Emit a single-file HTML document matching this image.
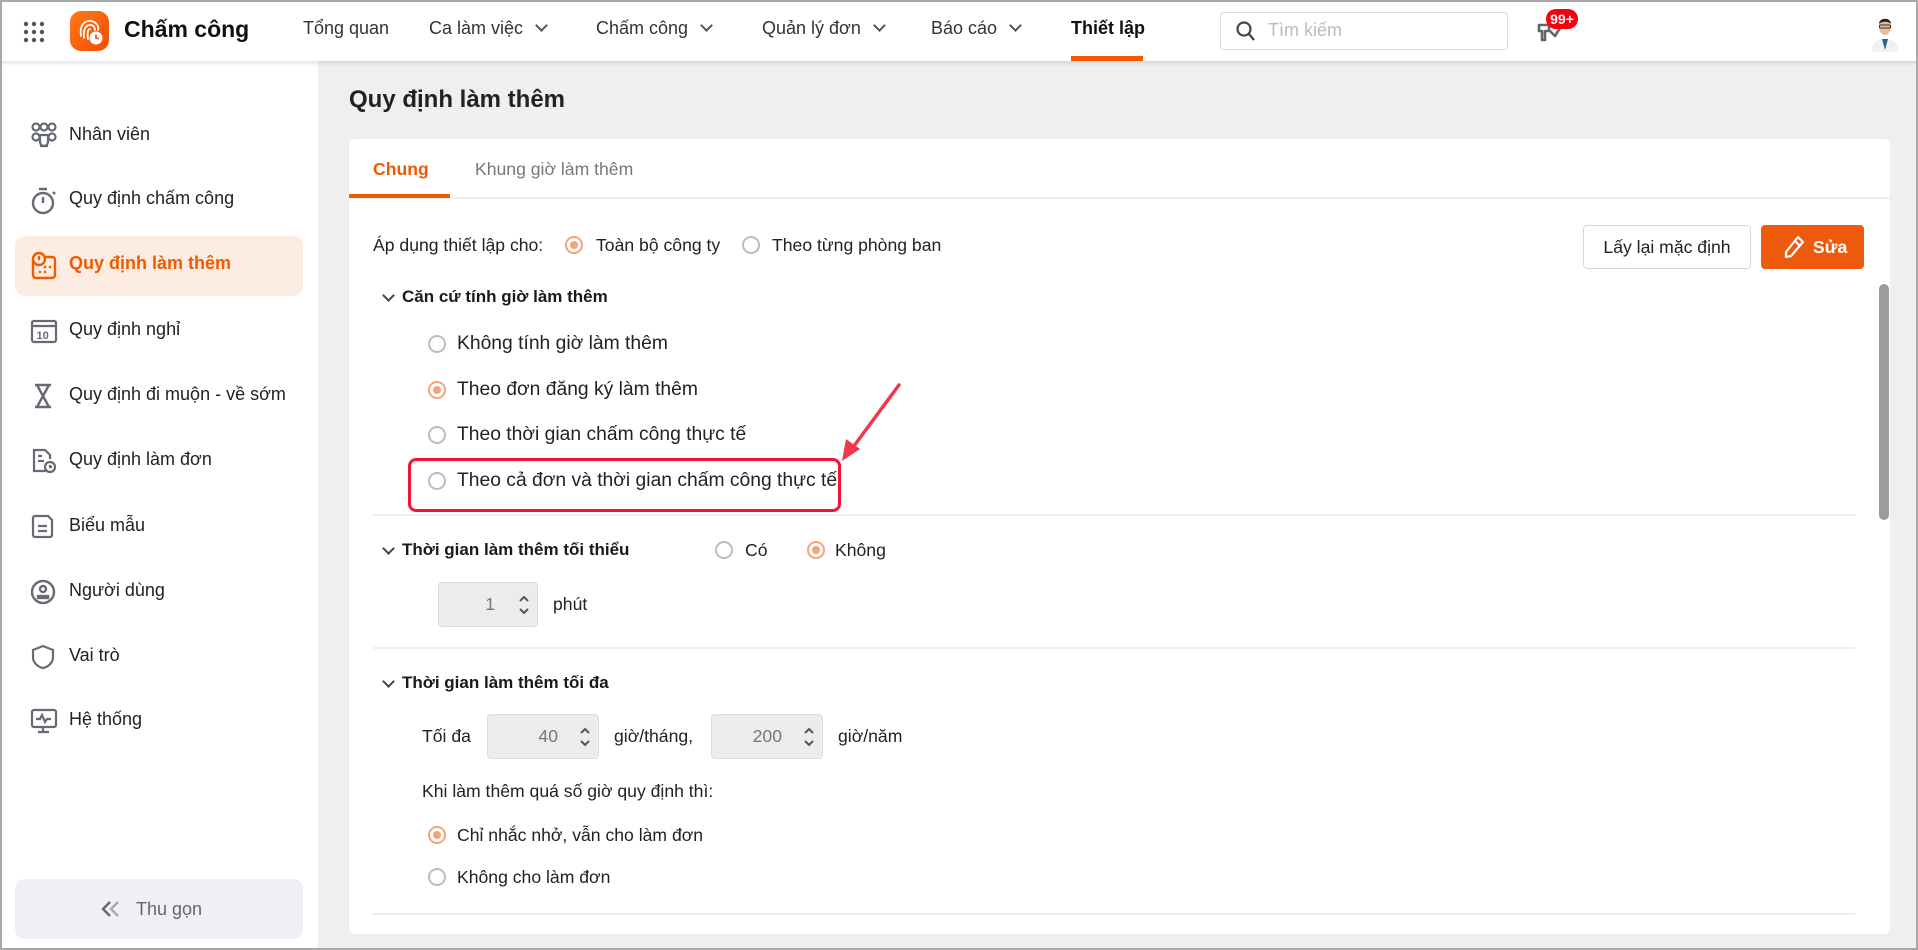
<!DOCTYPE html>
<html><head><meta charset="utf-8">
<style>
*{box-sizing:border-box;margin:0;padding:0}
body{width:1918px;height:950px;overflow:hidden;background:#efefef;font-family:"Liberation Sans",sans-serif;color:#212121;position:relative}
.a{position:absolute;white-space:nowrap}
#frame{position:absolute;left:0;top:0;width:1918px;height:950px;border:2px solid #a8a8a8;pointer-events:none;z-index:50}
#hdr{position:absolute;left:0;top:0;width:1918px;height:61px;background:#fff;box-shadow:0 2px 4px rgba(0,0,0,.12);z-index:5}
.nav{font-size:18px;color:#333;top:18px}
.chev{display:inline-block;width:9px;height:9px;border-right:2px solid #555;border-bottom:2px solid #555;transform:rotate(45deg);margin-left:14px;position:relative;top:-4px}
#side{position:absolute;left:0;top:61px;width:318px;height:889px;background:#fff}
.si{position:absolute;left:0;width:318px;height:40px}
.si svg{position:absolute;left:30px;top:7px}
.si span{position:absolute;left:69px;top:9px;font-size:18px;color:#222}
#card{position:absolute;left:349px;top:139px;width:1541px;height:795px;background:#fff;border-radius:6px}
.t{font-size:17.6px;color:#222}
.o{font-size:19.3px;color:#222}
.b{font-weight:bold;font-size:17px;color:#1a1a1a}
.r{position:absolute;width:18px;height:18px;border:2px solid #bdbdbd;border-radius:50%;background:#fff}
.r.on{border-color:#f4a37c}
.r.on::after{content:"";position:absolute;left:3px;top:3px;width:8px;height:8px;border-radius:50%;background:#f4a37c}
.dv{position:absolute;left:373px;width:1482px;height:2px;background:#eceef2}
.sc{position:absolute;width:9px;height:9px;border-left:2px solid #444;border-bottom:2px solid #444;transform:rotate(-45deg)}
.inp{position:absolute;background:#ececec;border:1px solid #dcdcdc;border-radius:4px;font-size:17.6px;color:#777;text-align:right}
.ud{position:absolute;right:8px;top:50%;width:10px;height:24px;margin-top:-12px}
</style></head><body>
<div id="frame"></div>
<div id="hdr">
 <svg class="a" style="left:23px;top:21px" width="22" height="22" viewBox="0 0 22 22" fill="#555"><circle cx="3" cy="3" r="2.2"/><circle cx="11" cy="3" r="2.2"/><circle cx="19" cy="3" r="2.2"/><circle cx="3" cy="11" r="2.2"/><circle cx="11" cy="11" r="2.2"/><circle cx="19" cy="11" r="2.2"/><circle cx="3" cy="19" r="2.2"/><circle cx="11" cy="19" r="2.2"/><circle cx="19" cy="19" r="2.2"/></svg>
 <svg class="a" style="left:70px;top:11px" width="39" height="40" viewBox="0 0 39 40"><defs><linearGradient id="g" x1="0" y1="0" x2="1" y2="1"><stop offset="0" stop-color="#ff7a1a"/><stop offset="1" stop-color="#f04d00"/></linearGradient></defs><rect width="39" height="40" rx="11" fill="url(#g)"/><g fill="none" stroke="#fff" stroke-width="1.8" stroke-linecap="round"><path d="M11 25 C9 14 15 9 21 10 C27 11 29 16 28 19"/><path d="M14 27 C13 18 16 14 20 14 C24 14 25 17 25 19"/><path d="M18 28 C17 22 18 18 20 18"/></g><circle cx="26" cy="27" r="6.5" fill="#fff"/><path d="M26 23.5 V27.5 H29" stroke="#f05a00" stroke-width="1.6" fill="none"/></svg>
 <div class="a" style="left:124px;top:16px;font-size:23px;font-weight:bold;color:#111">Chấm công</div>
 <div class="a nav" style="left:303px">Tổng quan</div>
 <div class="a nav" style="left:429px">Ca làm việc<span class="chev"></span></div>
 <div class="a nav" style="left:596px">Chấm công<span class="chev"></span></div>
 <div class="a nav" style="left:762px">Quản lý đơn<span class="chev"></span></div>
 <div class="a nav" style="left:931px">Báo cáo<span class="chev"></span></div>
 <div class="a nav" style="left:1071px;font-weight:bold;color:#111">Thiết lập</div>
 <div class="a" style="left:1071px;top:56px;width:72px;height:5px;background:#f05a00"></div>
 <div class="a" style="left:1220px;top:12px;width:288px;height:38px;border:1px solid #dcdcdc;border-radius:4px"></div>
 <svg class="a" style="left:1236px;top:21px" width="20" height="22" viewBox="0 0 20 22" fill="none" stroke="#444" stroke-width="2.2"><circle cx="8" cy="8" r="6.5"/><path d="M13 13 L18 19"/></svg>
 <div class="a" style="left:1268px;top:20px;font-size:18px;color:#bbb">Tìm kiếm</div>
 <svg class="a" style="left:1537px;top:22px" width="26" height="22" viewBox="0 0 26 22" fill="none" stroke="#666" stroke-width="2.6" stroke-linejoin="round"><path d="M2 3 H12 V9 H8 V18 H5 V9 H2 Z"/><path d="M12 8 L18 14 L23 6"/></svg>
 <div class="a" style="left:1546px;top:9px;width:32px;height:20px;background:#f5000f;border-radius:10px;color:#fff;font-size:14px;font-weight:bold;text-align:center;line-height:20px">99+</div>
 <svg class="a" style="left:1868px;top:12px" width="34" height="40" viewBox="0 0 34 40"><path d="M4 40 C4 30 10 27 17 27 C24 27 30 30 30 40 Z" fill="#eef2f5"/><path d="M14 27 L17 38 L20 27" fill="#2e5f86"/><ellipse cx="17" cy="15" rx="6" ry="8" fill="#e6bda0"/><path d="M11 12 C11 5 23 5 23 12 C21 9 13 9 11 12Z" fill="#222"/><rect x="11.5" y="13" width="11" height="3" rx="1" fill="none" stroke="#333" stroke-width="1"/></svg>
</div>

<div id="side">
 <div class="si" style="top:54px"><svg width="28" height="28" viewBox="0 0 28 28" fill="none" stroke="#666a75" stroke-width="2.2"><circle cx="6" cy="5" r="3.5"/><circle cx="14" cy="5" r="3.5"/><circle cx="22" cy="5" r="3.5"/><circle cx="6" cy="15" r="3.5"/><circle cx="22" cy="15" r="3.5"/><path d="M10 13 H18 V20 A4 4 0 0 1 10 20 Z"/><path d="M10 24 H18"/></svg><span>Nhân viên</span></div>
 <div class="si" style="top:118px"><svg width="28" height="30" viewBox="0 0 28 30" fill="none" stroke="#666a75" stroke-width="2.4"><circle cx="13" cy="17" r="10"/><path d="M9 3 H17 M13 11 V17 M23 6 L25 8"/></svg><span>Quy định chấm công</span></div>
 <div class="a" style="left:15px;top:175px;width:288px;height:60px;background:#fdece1;border-radius:10px"></div>
 <div class="si" style="top:183px"><svg width="28" height="30" viewBox="0 0 28 30" fill="none" stroke="#f05a00" stroke-width="2.4"><rect x="3" y="6" width="22" height="21" rx="3"/><circle cx="9" cy="8" r="6" fill="#fdece1"/><path d="M9 5 V9"/><g fill="#f05a00" stroke="none"><circle cx="10" cy="21" r="1.3"/><circle cx="15" cy="21" r="1.3"/><circle cx="15" cy="16" r="1.3"/><circle cx="20" cy="16" r="1.3"/></g></svg><span style="color:#f05a00;font-weight:bold">Quy định làm thêm</span></div>
 <div class="si" style="top:249px"><svg width="28" height="28" viewBox="0 0 28 28" fill="none" stroke="#666a75" stroke-width="2.2"><rect x="2" y="4" width="24" height="21" rx="2"/><path d="M2 9 H26"/><text x="6.5" y="22" font-size="11" font-weight="bold" fill="#666a75" stroke="none" font-family="Liberation Sans">10</text></svg><span>Quy định nghỉ</span></div>
 <div class="si" style="top:314px"><svg width="28" height="28" viewBox="0 0 28 28" fill="none" stroke="#666a75" stroke-width="2.4"><path d="M5 3 H21 M5 25 H21 M7 3 L19 25 M19 3 L7 25"/></svg><span>Quy định đi muộn - về sớm</span></div>
 <div class="si" style="top:379px"><svg width="28" height="28" viewBox="0 0 28 28" fill="none" stroke="#666a75" stroke-width="2.2"><path d="M16 24 H4 V3 H15 L20 8 V12"/><path d="M8 9 H12 M8 14 H14"/><circle cx="20" cy="20" r="5"/><path d="M20 18 V20 H22"/></svg><span>Quy định làm đơn</span></div>
 <div class="si" style="top:445px"><svg width="28" height="28" viewBox="0 0 28 28" fill="none" stroke="#666a75" stroke-width="2.2"><path d="M3 5 A2 2 0 0 1 5 3 H18 L22 7 V22 A2 2 0 0 1 20 24 H5 A2 2 0 0 1 3 22Z"/><path d="M8 13 H17 M8 18 H17"/></svg><span>Biểu mẫu</span></div>
 <div class="si" style="top:510px"><svg width="28" height="28" viewBox="0 0 28 28" fill="none" stroke="#666a75" stroke-width="2.4"><circle cx="13" cy="14" r="11"/><circle cx="13" cy="11" r="3"/><path d="M8 18 H18 V20 H8Z"/></svg><span>Người dùng</span></div>
 <div class="si" style="top:575px"><svg width="28" height="28" viewBox="0 0 28 28" fill="none" stroke="#666a75" stroke-width="2.2"><path d="M13 3 L23 7 V14 C23 20 18 24 13 25 C8 24 3 20 3 14 V7 Z"/></svg><span>Vai trò</span></div>
 <div class="si" style="top:639px"><svg width="28" height="28" viewBox="0 0 28 28" fill="none" stroke="#666a75" stroke-width="2.2"><rect x="2" y="3" width="24" height="17" rx="2"/><path d="M6 12 H10 L12 8 L15 15 L17 12 H21 M8 25 H19 M13 20 V25"/></svg><span>Hệ thống</span></div>
 <div class="a" style="left:15px;top:818px;width:288px;height:60px;background:#eef0f5;border-radius:10px"></div>
 <svg class="a" style="left:101px;top:838px" width="20" height="20" viewBox="0 0 20 20" fill="none" stroke-width="2.4"><path d="M9 3 L2 10 L9 17" stroke="#666"/><path d="M17 3 L10 10 L17 17" stroke="#aaa"/></svg>
 <div class="a" style="left:136px;top:838px;font-size:18px;color:#666">Thu gọn</div>
</div>

<div class="a" style="left:349px;top:86px;font-size:24px;font-weight:bold;color:#222">Quy định làm thêm</div>

<div id="card"></div>
<div class="a" style="left:349px;top:197px;width:1541px;height:2px;background:#eceef2"></div>
<div class="a" style="left:349px;top:194px;width:101px;height:4px;background:#f05a00"></div>
<div class="a" style="left:373px;top:159px;font-size:17.6px;font-weight:bold;color:#f05a00">Chung</div>
<div class="a t" style="left:475px;top:159px;color:#777">Khung giờ làm thêm</div>

<div class="a t" style="left:373px;top:235px">Áp dụng thiết lập cho:</div>
<div class="r on" style="left:565px;top:236px"></div>
<div class="a t" style="left:596px;top:235px">Toàn bộ công ty</div>
<div class="r" style="left:742px;top:236px"></div>
<div class="a t" style="left:772px;top:235px">Theo từng phòng ban</div>

<div class="a" style="left:1583px;top:225px;width:168px;height:44px;border:1px solid #d6d6de;border-radius:4px;font-size:17.6px;text-align:center;line-height:42px;color:#222">Lấy lại mặc định</div>
<div class="a" style="left:1761px;top:225px;width:103px;height:44px;background:#ee5a0b;border-radius:4px;color:#fff;font-size:17.6px;font-weight:bold;line-height:44px;padding-left:52px">Sửa</div>
<svg class="a" style="left:1783px;top:235px" width="22" height="24" viewBox="0 0 22 24" fill="none" stroke="#fff" stroke-width="2.2" stroke-linejoin="round"><path d="M15 2 L20 7 L8 21 L3 22 L3 17 Z M12 6 L17 11"/></svg>
<div class="a" style="left:1879px;top:284px;width:10px;height:236px;background:#9c9c9c;border-radius:5px"></div>

<div class="sc" style="left:384px;top:291px"></div>
<div class="a b" style="left:402px;top:287px">Căn cứ tính giờ làm thêm</div>
<div class="r" style="left:428px;top:335px"></div><div class="a o" style="left:457px;top:333px">Không tính giờ làm thêm</div>
<div class="r on" style="left:428px;top:381px"></div><div class="a o" style="left:457px;top:379px">Theo đơn đăng ký làm thêm</div>
<div class="r" style="left:428px;top:426px"></div><div class="a o" style="left:457px;top:424px">Theo thời gian chấm công thực tế</div>
<div class="r" style="left:428px;top:472px"></div><div class="a o" style="left:457px;top:470px">Theo cả đơn và thời gian chấm công thực tế</div>
<div class="a" style="left:408px;top:458px;width:433px;height:54px;border:3px solid #f0143c;border-radius:8px"></div>
<svg class="a" style="left:830px;top:375px" width="80" height="90" viewBox="0 0 80 90"><path d="M69 10 L21 75" stroke="#f0384a" stroke-width="3.5" stroke-linecap="round"/><path d="M12 86 L16 64 L30 74 Z" fill="#f0384a"/></svg>
<div class="dv" style="top:514px"></div>

<div class="sc" style="left:384px;top:544px"></div>
<div class="a b" style="left:402px;top:540px">Thời gian làm thêm tối thiểu</div>
<div class="r" style="left:715px;top:541px"></div><div class="a t" style="left:745px;top:540px">Có</div>
<div class="r on" style="left:807px;top:541px"></div><div class="a t" style="left:835px;top:540px">Không</div>
<div class="inp" style="left:438px;top:582px;width:100px;height:45px;line-height:43px;padding-right:42px">1<svg class="ud" viewBox="0 0 10 24" fill="none" stroke="#555" stroke-width="2"><path d="M1 8 L5 4 L9 8 M1 16 L5 20 L9 16"/></svg></div>
<div class="a t" style="left:553px;top:594px">phút</div>
<div class="dv" style="top:647px"></div>

<div class="sc" style="left:384px;top:677px"></div>
<div class="a b" style="left:402px;top:673px">Thời gian làm thêm tối đa</div>
<div class="a t" style="left:422px;top:726px">Tối đa</div>
<div class="inp" style="left:487px;top:714px;width:112px;height:45px;line-height:43px;padding-right:40px">40<svg class="ud" viewBox="0 0 10 24" fill="none" stroke="#555" stroke-width="2"><path d="M1 8 L5 4 L9 8 M1 16 L5 20 L9 16"/></svg></div>
<div class="a t" style="left:614px;top:726px">giờ/tháng,</div>
<div class="inp" style="left:711px;top:714px;width:112px;height:45px;line-height:43px;padding-right:40px">200<svg class="ud" viewBox="0 0 10 24" fill="none" stroke="#555" stroke-width="2"><path d="M1 8 L5 4 L9 8 M1 16 L5 20 L9 16"/></svg></div>
<div class="a t" style="left:838px;top:726px">giờ/năm</div>
<div class="a t" style="left:422px;top:781px">Khi làm thêm quá số giờ quy định thì:</div>
<div class="r on" style="left:428px;top:826px"></div><div class="a t" style="left:457px;top:825px">Chỉ nhắc nhở, vẫn cho làm đơn</div>
<div class="r" style="left:428px;top:868px"></div><div class="a t" style="left:457px;top:867px">Không cho làm đơn</div>
<div class="dv" style="top:913px"></div>
</body></html>
